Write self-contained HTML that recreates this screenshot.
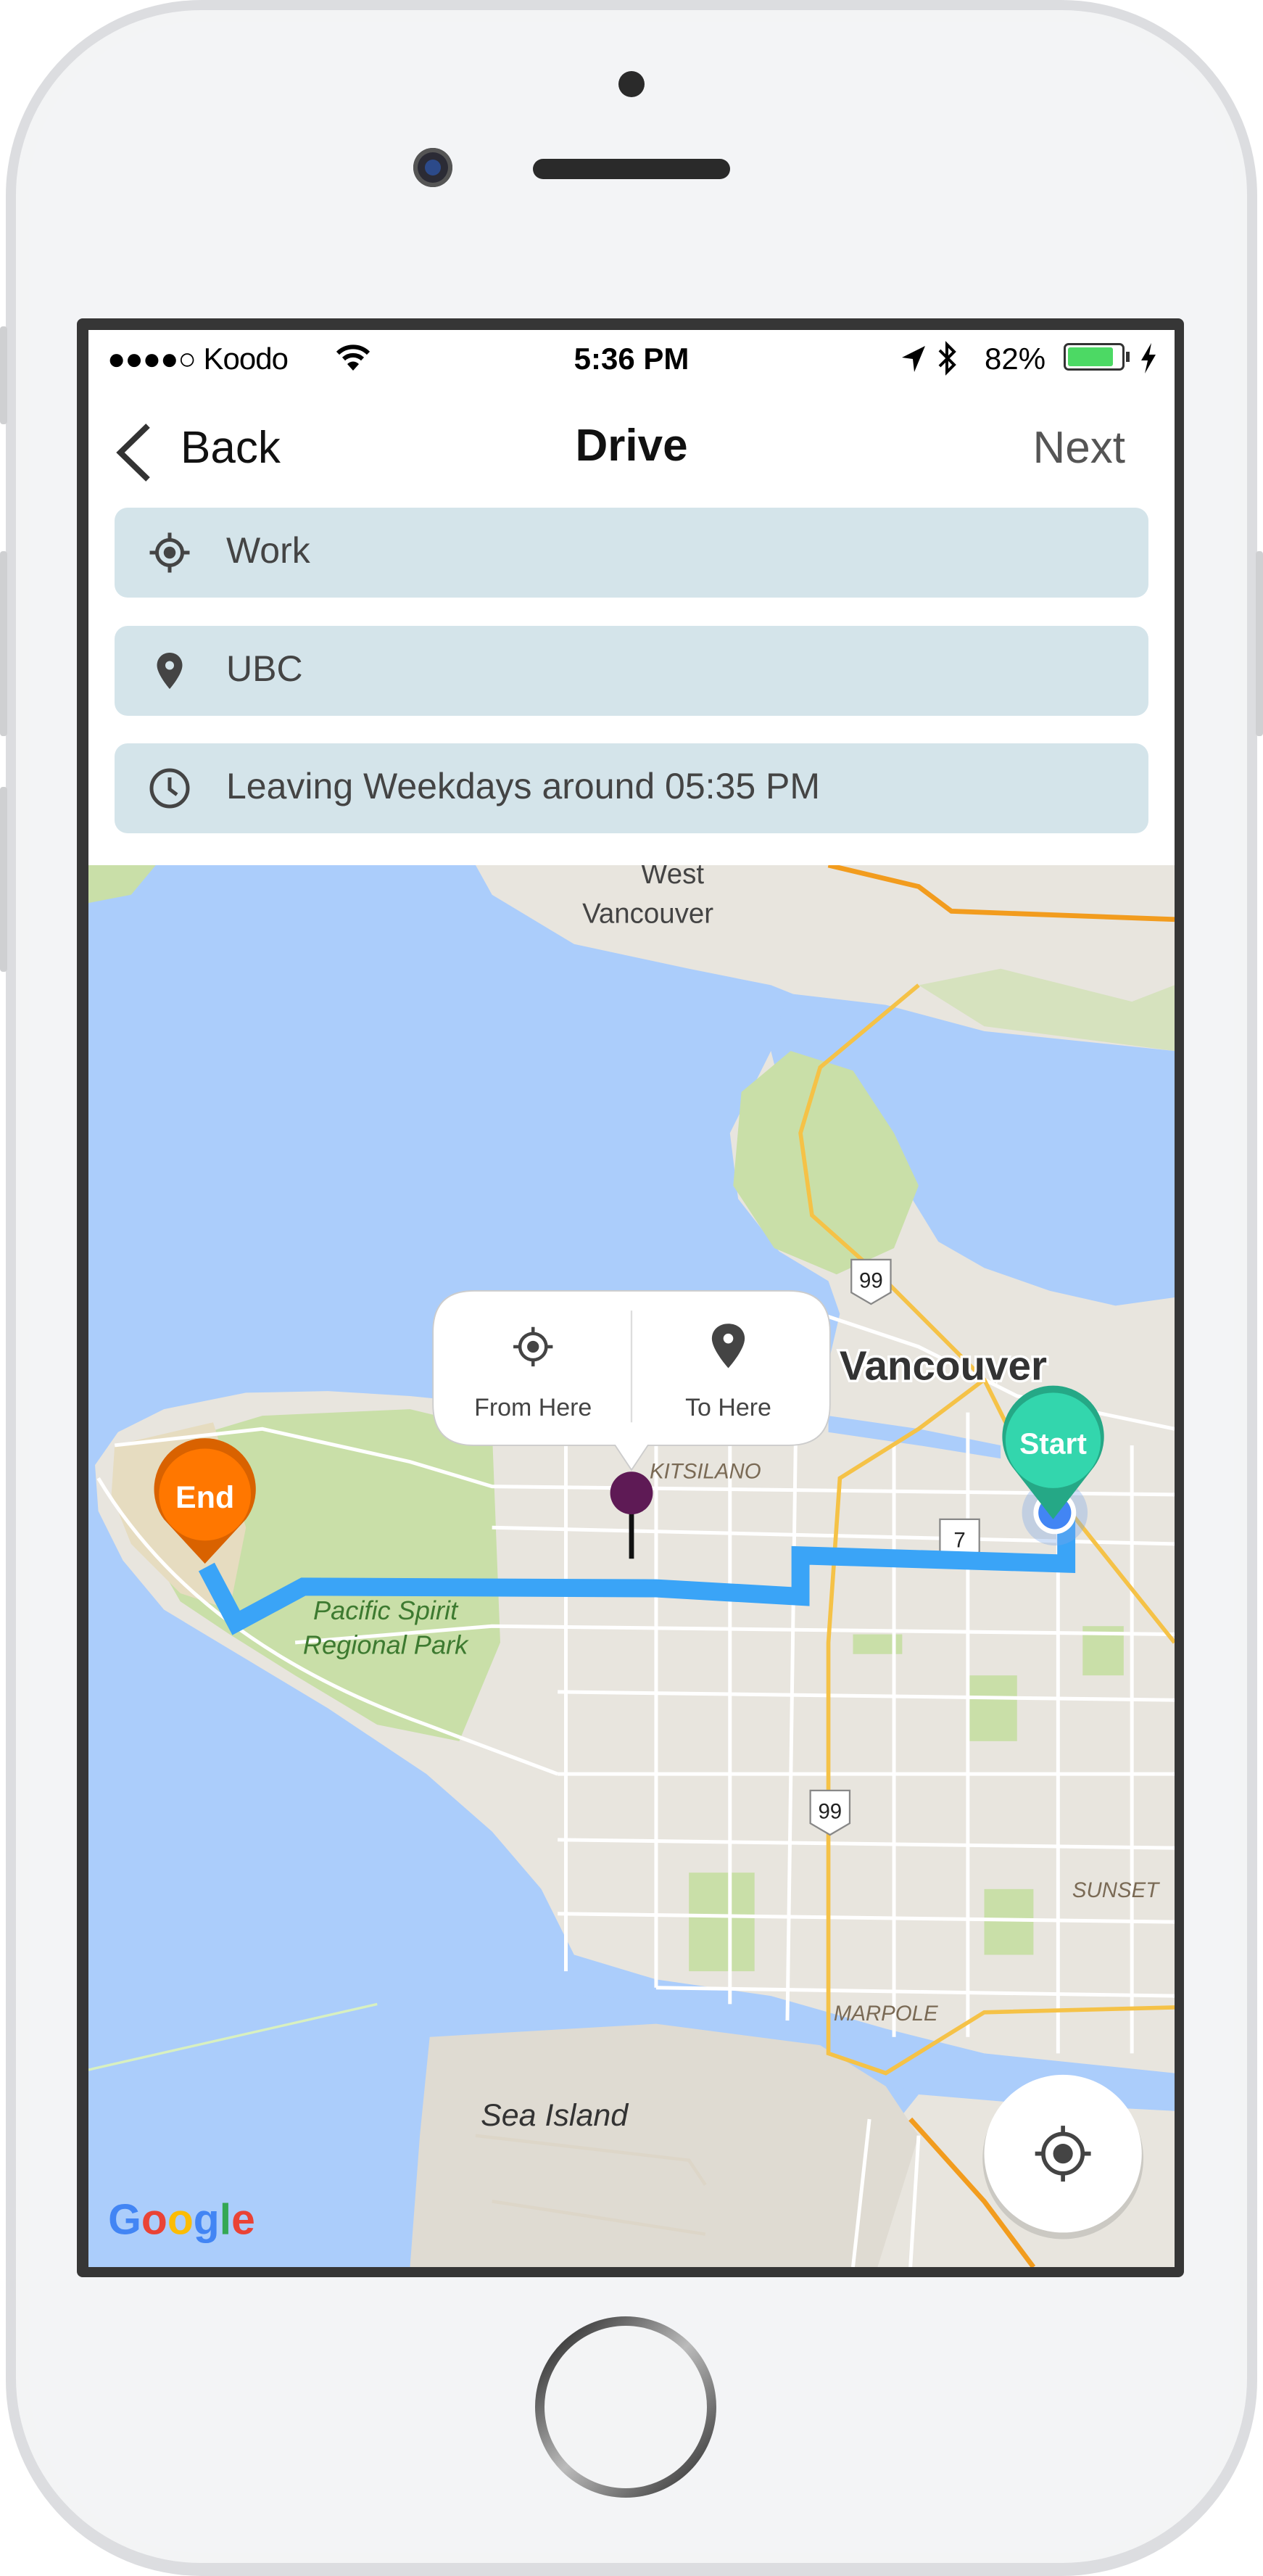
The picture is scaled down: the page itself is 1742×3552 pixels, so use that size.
<!DOCTYPE html>
<html><head><meta charset="utf-8"><style>
html,body{margin:0;padding:0;width:1742px;height:3552px;background:#fff;overflow:hidden;font-family:"Liberation Sans",sans-serif}
.abs{position:absolute}
.phone{left:8px;top:0;width:1726px;height:3552px;border-radius:270px;background:#dcdde0;}
.face{left:22px;top:14px;width:1698px;height:3520px;border-radius:255px;background:#f3f4f5;}
.face2{left:40px;top:30px;width:1662px;height:3490px;border-radius:240px;background:#f3f4f6;}
.bezel{left:106px;top:439px;width:1527px;height:2701px;background:#363636;border-radius:8px}
.screen{left:122px;top:455px;width:1498px;height:2671px;background:#fff;overflow:hidden}
.field{position:absolute;left:36px;width:1426px;height:124px;background:#d4e4ea;border-radius:18px}
.field span{position:absolute;left:154px;top:30px;font-size:50px;color:#444}
.field svg{position:absolute;left:46px;top:32px}
</style></head><body>
<div class="abs phone"></div>
<div class="abs face"></div>
<div class="abs face2"></div>
<!-- side buttons -->
<div class="abs" style="left:0;top:450px;width:10px;height:135px;background:#cfd0d2;border-radius:4px"></div>
<div class="abs" style="left:0;top:760px;width:10px;height:255px;background:#cfd0d2;border-radius:4px"></div>
<div class="abs" style="left:0;top:1085px;width:10px;height:255px;background:#cfd0d2;border-radius:4px"></div>
<div class="abs" style="left:1732px;top:760px;width:10px;height:255px;background:#cfd0d2;border-radius:4px"></div>
<!-- camera, dot, speaker -->
<div class="abs" style="left:853px;top:98px;width:36px;height:36px;border-radius:50%;background:#2a2a2a"></div>
<div class="abs" style="left:570px;top:204px;width:54px;height:54px;border-radius:50%;background:#2b2b35;box-shadow:inset 0 0 0 6px #555"></div>
<div class="abs" style="left:586px;top:220px;width:22px;height:22px;border-radius:50%;background:#2c4a8a"></div>
<div class="abs" style="left:735px;top:219px;width:272px;height:28px;border-radius:14px;background:#2a2a2a"></div>
<!-- home button -->
<div class="abs" style="left:738px;top:3194px;width:250px;height:250px;border-radius:50%;background:linear-gradient(135deg,#111,#bbb 50%,#222);"></div>
<div class="abs" style="left:751px;top:3207px;width:224px;height:224px;border-radius:50%;background:#f3f4f5"></div>

<div class="abs bezel"></div>
<div class="abs screen">
  <!-- status bar -->
  <div class="abs" style="left:26px;top:16px;font-size:42px;color:#000;letter-spacing:-1px">●●●●○ Koodo</div>
  <svg class="abs" style="left:340px;top:18px" width="50" height="42" viewBox="0 0 50 42"><path d="M4 14 A30 30 0 0 1 46 14" stroke="#000" stroke-width="6" fill="none"/><path d="M12 22 A19 19 0 0 1 38 22" stroke="#000" stroke-width="6" fill="none"/><path d="M25 38 L17 29 A11 11 0 0 1 33 29 Z" fill="#000"/></svg>
  <div class="abs" style="left:0;width:1498px;top:16px;text-align:center;font-size:42px;font-weight:bold">5:36 PM</div>
  <svg class="abs" style="left:1120px;top:20px" width="36" height="40" viewBox="0 0 36 40"><path d="M34 2 L2 18 L17 20 L19 38 Z" fill="#000"/></svg>
  <svg class="abs" style="left:1170px;top:14px" width="30" height="52" viewBox="0 0 30 52"><path d="M4 14 L24 34 L14 44 L14 6 L24 16 L4 36" stroke="#000" stroke-width="4" fill="none"/></svg>
  <div class="abs" style="left:1236px;top:16px;font-size:42px">82%</div>
  <div class="abs" style="left:1345px;top:18px;width:84px;height:38px;border:3px solid #333;border-radius:7px;box-sizing:border-box;padding:3px"><div style="width:62px;height:26px;background:#4cd964;border-radius:3px"></div></div>
  <div class="abs" style="left:1431px;top:30px;width:5px;height:14px;background:#333"></div>
  <svg class="abs" style="left:1450px;top:18px" width="24" height="42" viewBox="0 0 24 42"><path d="M16 0 L2 24 L11 24 L7 42 L22 16 L13 16 Z" fill="#000"/></svg>
  <!-- nav -->
  <svg class="abs" style="left:34px;top:128px" width="56" height="82" viewBox="0 0 56 82"><path d="M48 4 L10 41 L48 78" stroke="#333" stroke-width="8" fill="none"/></svg>
  <div class="abs" style="left:127px;top:127px;font-size:62px;color:#111">Back</div>
  <div class="abs" style="left:0;width:1498px;top:124px;text-align:center;font-size:62px;font-weight:bold;color:#111">Drive</div>
  <div class="abs" style="right:68px;top:127px;font-size:62px;color:#555">Next</div>
  <!-- fields -->
  <div class="field" style="top:245px"><svg width="60" height="60" viewBox="0 0 24 24"><circle cx="12" cy="12" r="7" stroke="#444" stroke-width="2" fill="none"/><circle cx="12" cy="12" r="3.3" fill="#444"/><path d="M12 1v4M12 19v4M1 12h4M19 12h4" stroke="#444" stroke-width="2"/></svg><span>Work</span></div>
  <div class="field" style="top:408px"><svg width="60" height="60" viewBox="0 0 24 24"><path d="M12 2C8 2 5 5 5 9c0 5 7 13 7 13s7-8 7-13c0-4-3-7-7-7z" fill="#444"/><circle cx="12" cy="9" r="2.4" fill="#d4e4ea"/></svg><span>UBC</span></div>
  <div class="field" style="top:570px"><svg width="60" height="60" viewBox="0 0 24 24"><circle cx="12" cy="12" r="10" stroke="#444" stroke-width="2" fill="none"/><path d="M12 6v6.5l4 3" stroke="#444" stroke-width="2" fill="none"/></svg><span>Leaving Weekdays around 05:35 PM</span></div>
  <!-- map -->
  <svg class="abs" style="left:0;top:738px" width="1498" height="1933" viewBox="54 527 662 853" preserveAspectRatio="none" font-family="Liberation Sans, sans-serif">
    <rect x="54" y="527" width="662" height="853" fill="#e8e5de"/>
    <!-- main water -->
    <path d="M54 545 L80 540 L95 527 L290 527 L300 545 L350 575 L420 590 L470 600 L500 612 L470 640 L445 690 L450 730 L475 762 L505 780 L512 800 L505 830 L498 855 L478 870 L430 873 L380 868 L300 855 L250 850 L200 847 L150 848 L100 858 L72 872 L58 892 L60 920 L75 950 L100 980 L150 1010 L200 1040 L260 1080 L300 1115 L330 1150 L350 1190 L400 1205 L470 1215 L540 1235 L600 1250 L716 1262 L716 1285 L620 1280 L560 1275 L540 1300 L525 1380 L54 1380 Z" fill="#abcdfb"/>
    <!-- burrard inlet -->
    <path d="M480 605 L540 612 L600 628 L716 640 L716 790 L680 795 L640 786 L600 772 L572 756 L556 730 L542 700 L520 690 L498 698 L480 680 L470 640 Z" fill="#abcdfb"/>
    <!-- north shore land top -->
    <path d="M290 527 L716 527 L716 640 L600 622 L540 605 L470 596 L420 586 L350 570 L300 540 Z" fill="#e8e5de"/>
    <path d="M54 527 L95 527 L80 545 L54 550 Z" fill="#c9dfa8"/>
    <path d="M560 600 L610 590 L650 600 L690 610 L716 600 L716 640 L600 625 Z" fill="#c9dfa8" opacity=".6"/>
    <!-- stanley park -->
    <path d="M452 665 L482 640 L520 652 L545 690 L560 722 L545 760 L510 776 L472 760 L447 722 Z" fill="#c9dfa8"/>
    <!-- ubc / pacific spirit green -->
    <path d="M100 880 L160 862 L250 858 L300 870 L305 1000 L280 1060 L230 1050 L180 1020 L140 995 L110 975 L90 940 Z" fill="#c9dfa8"/>
    <path d="M70 880 L130 866 L150 930 L140 980 L110 970 L80 940 L68 910 Z" fill="#e6dcc0"/>
    <!-- false creek -->
    <path d="M505 862 L560 870 L610 880 L610 888 L560 880 L505 872 Z" fill="#abcdfb"/>
    <!-- fraser river north arm -->
    <path d="M290 1210 L400 1218 L470 1230 L540 1248 L620 1258 L716 1265 L716 1282 L620 1278 L540 1270 L470 1245 L400 1232 L290 1225 Z" fill="#abcdfb"/>
    <!-- sea island -->
    <path d="M262 1240 L400 1232 L500 1245 L540 1270 L560 1300 L535 1380 L250 1380 L256 1300 Z" fill="#dfdbd2"/>
    <path d="M54 1260 L230 1220" stroke="#d8f0c0" stroke-width="1.5"/>
    <!-- parks scattered -->
    <rect x="590" y="1020" width="30" height="40" fill="#c9dfa8"/><rect x="600" y="1150" width="30" height="40" fill="#c9dfa8"/>
    <rect x="660" y="990" width="25" height="30" fill="#c9dfa8"/><rect x="420" y="1140" width="40" height="60" fill="#c9dfa8"/>
    <rect x="520" y="995" width="30" height="12" fill="#c9dfa8"/>
    <!-- roads -->
    <g stroke="#fff" stroke-width="2.2" fill="none">
      <path d="M70 880 L160 870 L250 890 L300 905 L716 910"/>
      <path d="M300 930 L716 940"/><path d="M180 1000 L300 990 L716 995"/>
      <path d="M340 1030 L716 1035"/><path d="M340 1080 L716 1080"/><path d="M340 1120 L716 1125"/>
      <path d="M340 1165 L716 1170"/><path d="M400 1210 L716 1215"/>
      <path d="M345 880 L345 1200"/><path d="M400 880 L400 1210"/><path d="M445 880 L445 1220"/>
      <path d="M485 880 L480 1230"/><path d="M545 880 L545 1240"/><path d="M590 860 L590 1240"/>
      <path d="M645 860 L645 1250"/><path d="M690 880 L690 1250"/>
      <path d="M60 900 Q120 1000 260 1050 L340 1080"/>
      <path d="M500 800 L560 820 L620 850 L716 870"/>
      <path d="M530 1290 L520 1380"/><path d="M560 1300 L555 1380"/>
    </g>
    <g stroke="#ddd6c8" stroke-width="2" fill="none"><path d="M290 1300 L420 1315 L430 1330"/><path d="M300 1340 L430 1360"/></g>
    <!-- highways -->
    <path d="M560 600 L500 650 L488 690 L495 740 L540 780 L600 840 L620 880 L716 1000" stroke="#f5c247" stroke-width="2.5" fill="none"/>
    <path d="M600 840 L560 870 L512 900 L505 1000 L505 1250 L540 1262 L600 1225 L716 1222" stroke="#f5c247" stroke-width="2.5" fill="none"/>
    <path d="M505 527 L560 540 L580 555 L716 560" stroke="#f29c1e" stroke-width="3" fill="none"/>
    <path d="M555 1290 L600 1340 L630 1380" stroke="#f29c1e" stroke-width="3" fill="none"/>
    <!-- shields -->
    <g font-size="13" text-anchor="middle" fill="#222"><path d="M519 767 h24 v20 l-12 7 l-12 -7z" fill="#fff" stroke="#888"/><text x="531" y="784">99</text>
    <path d="M494 1090 h24 v20 l-12 7 l-12 -7z" fill="#fff" stroke="#888"/><text x="506" y="1107">99</text>
    <path d="M573 925 h24 v20 l-12 7 l-12 -7z" fill="#fff" stroke="#888"/><text x="585" y="942">7</text></g>
    <!-- labels -->
    <g font-size="17" fill="#444" text-anchor="middle"><text x="410" y="538">West</text><text x="395" y="562">Vancouver</text></g>
    <text x="575" y="840" font-size="25" font-weight="bold" fill="#333" text-anchor="middle" stroke="#fff" stroke-width="3" paint-order="stroke">Vancouver</text>
    <text x="430" y="900" font-size="13" font-style="italic" fill="#7a6a55" text-anchor="middle">KITSILANO</text>
    <g font-size="16" font-style="italic" fill="#3d7a30" text-anchor="middle"><text x="235" y="986">Pacific Spirit</text><text x="235" y="1007">Regional Park</text></g>
    <text x="680" y="1155" font-size="13" font-style="italic" fill="#7a6a55" text-anchor="middle">SUNSET</text>
    <text x="540" y="1230" font-size="13" font-style="italic" fill="#7a6a55" text-anchor="middle">MARPOLE</text>
    <text x="338" y="1294" font-size="19" font-style="italic" fill="#333" text-anchor="middle">Sea Island</text>
    <text x="66" y="1360" font-size="26" font-weight="bold"><tspan fill="#4285f4">G</tspan><tspan fill="#ea4335">o</tspan><tspan fill="#fbbc05">o</tspan><tspan fill="#4285f4">g</tspan><tspan fill="#34a853">l</tspan><tspan fill="#ea4335">e</tspan></text>
    <!-- route -->
    <path d="M126 954 L144 988 L185 966 L400 967 L488 972 L488 947 L650 952 L650 922" stroke="#3aa4f7" stroke-width="11" fill="none" stroke-linejoin="miter"/>
    <!-- blue dot -->
    <circle cx="643" cy="921" r="20" fill="#7aa7e8" opacity=".35"/>
    <circle cx="643" cy="921" r="13" fill="#fff"/><circle cx="643" cy="921" r="10" fill="#4285f4"/>
    <!-- end marker -->
    <path d="M100 925 A31 31 0 1 1 150 925 L125 952 Z" fill="#d96200"/>
    <circle cx="125" cy="910" r="28" fill="#ff7700"/>
    <text x="125" y="918" font-size="19" font-weight="bold" fill="#fff" text-anchor="middle">End</text>
    <!-- start marker -->
    <path d="M617 893 A31 31 0 1 1 667 893 L642 925 Z" fill="#25a886"/>
    <circle cx="642" cy="877" r="29" fill="#33d6ad"/>
    <text x="642" y="885" font-size="18" font-weight="bold" fill="#fff" text-anchor="middle">Start</text>
    <!-- pin -->
    <line x1="385" y1="908" x2="385" y2="949" stroke="#111" stroke-width="3"/>
    <circle cx="385" cy="909" r="13" fill="#5e1a55"/>
    <!-- popup -->
    <path d="M289 786 L481 786 Q506 786 506 811 L506 855 Q506 880 481 880 L395 880 L385 895 L375 880 L289 880 Q264 880 264 855 L264 811 Q264 786 289 786 Z" fill="#fff" stroke="#ccc" stroke-width=".8"/>
    <line x1="385" y1="798" x2="385" y2="866" stroke="#ddd" stroke-width="1"/>
    <circle cx="325" cy="820" r="8" stroke="#444" stroke-width="2" fill="none"/><circle cx="325" cy="820" r="3.6" fill="#444"/>
    <path d="M325 808v4M325 828v4M313 820h4M333 820h4" stroke="#444" stroke-width="2"/>
    <path d="M444 806c-6 0-10 4-10 9 0 7 10 18 10 18s10-11 10-18c0-5-4-9-10-9z" fill="#444"/><circle cx="444" cy="815" r="3" fill="#fff"/>
    <g font-size="15" fill="#444" text-anchor="middle"><text x="325" y="862">From Here</text><text x="444" y="862">To Here</text></g>
    <!-- locate button -->
    <circle cx="648" cy="1314" r="49" fill="#000" opacity=".12"/>
    <circle cx="648" cy="1311" r="48" fill="#fff"/>
    <circle cx="648" cy="1311" r="12" stroke="#444" stroke-width="2.5" fill="none"/><circle cx="648" cy="1311" r="6" fill="#444"/>
    <path d="M648 1294v6M648 1322v6M631 1311h6M659 1311h6" stroke="#444" stroke-width="2.5"/>
  </svg>
</div>
</body></html>
